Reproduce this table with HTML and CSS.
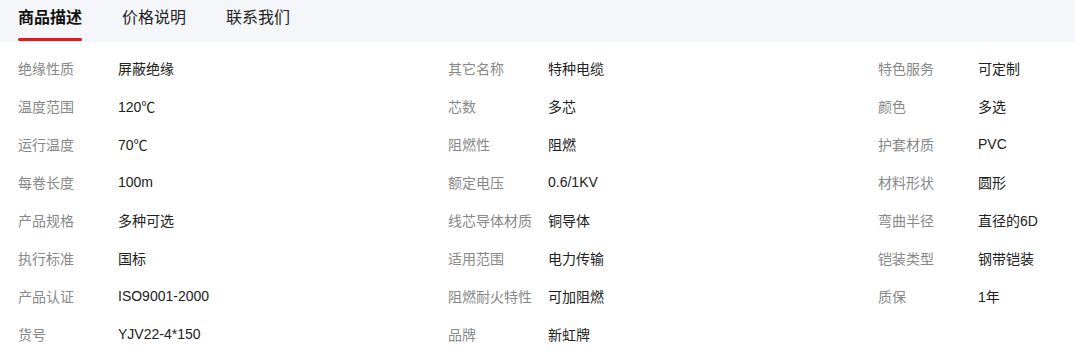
FILE: index.html
```html
<!DOCTYPE html>
<html lang="zh">
<head>
<meta charset="utf-8">
<link rel="stylesheet" href="styles.css">
</head>
<body>
<div class="tabs">
  <div class="tab active">商品描述</div>
  <div class="tab">价格说明</div>
  <div class="tab">联系我们</div>
</div>
<div class="attrs">
  <div class="item"><span class="k">绝缘性质</span><span class="v">屏蔽绝缘</span></div>
  <div class="item"><span class="k">其它名称</span><span class="v">特种电缆</span></div>
  <div class="item"><span class="k">特色服务</span><span class="v">可定制</span></div>
  <div class="item"><span class="k">温度范围</span><span class="v">120℃</span></div>
  <div class="item"><span class="k">芯数</span><span class="v">多芯</span></div>
  <div class="item"><span class="k">颜色</span><span class="v">多选</span></div>
  <div class="item"><span class="k">运行温度</span><span class="v">70℃</span></div>
  <div class="item"><span class="k">阻燃性</span><span class="v">阻燃</span></div>
  <div class="item"><span class="k">护套材质</span><span class="v">PVC</span></div>
  <div class="item"><span class="k">每卷长度</span><span class="v">100m</span></div>
  <div class="item"><span class="k">额定电压</span><span class="v">0.6/1KV</span></div>
  <div class="item"><span class="k">材料形状</span><span class="v">圆形</span></div>
  <div class="item"><span class="k">产品规格</span><span class="v">多种可选</span></div>
  <div class="item"><span class="k">线芯导体材质</span><span class="v">铜导体</span></div>
  <div class="item"><span class="k">弯曲半径</span><span class="v">直径的6D</span></div>
  <div class="item"><span class="k">执行标准</span><span class="v">国标</span></div>
  <div class="item"><span class="k">适用范围</span><span class="v">电力传输</span></div>
  <div class="item"><span class="k">铠装类型</span><span class="v">钢带铠装</span></div>
  <div class="item"><span class="k">产品认证</span><span class="v">ISO9001-2000</span></div>
  <div class="item"><span class="k">阻燃耐火特性</span><span class="v">可加阻燃</span></div>
  <div class="item"><span class="k">质保</span><span class="v">1年</span></div>
  <div class="item"><span class="k">货号</span><span class="v">YJV22-4*150</span></div>
  <div class="item"><span class="k">品牌</span><span class="v">新虹牌</span></div>
</div>
</body>
</html>
```
FILE: styles.css
```css
html, body {
  margin: 0;
  padding: 0;
  background: #fff;
}
body {
  font-family: "Liberation Sans", "Noto Sans CJK SC", sans-serif;
  color: #222;
}
.tabs {
  display: flex;
  gap: 40px;
  height: 42px;
  padding-left: 18px;
  background: #f5f6fa;
  box-sizing: border-box;
}
.tab {
  font-size: 16px;
  line-height: 36px;
  color: #222;
  position: relative;
}
.tab.active {
  font-weight: bold;
  color: #111;
}
.tab.active::after {
  content: "";
  position: absolute;
  left: 0;
  right: 0;
  top: 38px;
  height: 3px;
  border-radius: 2px;
  background: #e5161d;
}
.attrs {
  display: grid;
  grid-template-columns: 430px 430px 1fr;
  padding: 7px 0 0 18px;
}
.item {
  display: flex;
  height: 38px;
  align-items: center;
  font-size: 14px;
}
.k {
  width: 100px;
  flex: none;
  color: #888;
}
.v {
  color: #222;
}
```
